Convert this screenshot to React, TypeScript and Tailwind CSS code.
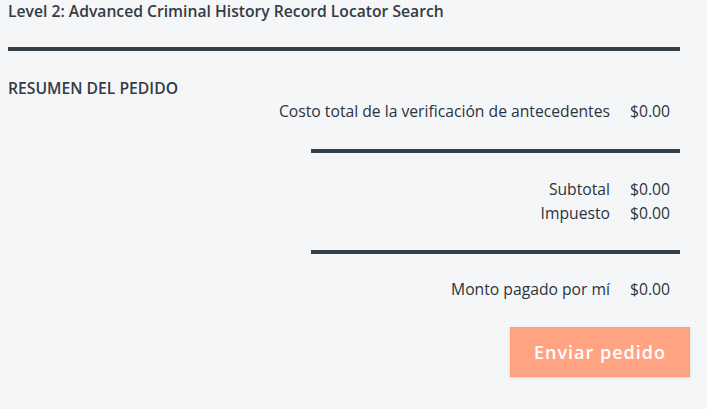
const rows1 = [{ label: 'Costo total de la verificación de antecedentes', value: '$0.00' }];
const rows2 = [
  { label: 'Subtotal', value: '$0.00' },
  { label: 'Impuesto', value: '$0.00' },
];

function Row({ label, value }: { label: string; value: string }) {
  return (
    <div className="flex justify-end items-center h-6">
      <span>{label}</span>
      <span className="w-[59px] pl-5">{value}</span>
    </div>
  );
}

export default function App() {
  return (
    <div
      className="w-[707px] h-[409px] bg-[#f5f6f8] text-[#2b333d] text-[15.7px]"
      style={{ fontFamily: '"Open Sans", "Liberation Sans", sans-serif' }}
    >
      <div className="w-[672px] ml-2">
        <h1 className="font-semibold leading-[22px] text-[#333b45]">
          Level 2: Advanced Criminal History Record Locator Search
        </h1>
        <div className="h-1 bg-[#333e48] mt-[25px]" />
        <h2 className="font-semibold mt-[26px] leading-[22px] text-[#333b45]">RESUMEN DEL PEDIDO</h2>
        <div className="pr-[11px] mt-[1px]">
          {rows1.map((r) => (
            <Row key={r.label} {...r} />
          ))}
        </div>
        <div className="h-1 bg-[#333e48] ml-[303px] mt-[25px]" />
        <div className="pr-[11px] mt-[25px]">
          {rows2.map((r) => (
            <Row key={r.label} {...r} />
          ))}
        </div>
        <div className="h-1 bg-[#333e48] ml-[303px] mt-6" />
        <div className="pr-[11px] mt-6">
          <Row label="Monto pagado por mí" value="$0.00" />
        </div>
        <div className="flex justify-end mt-[25px] -mr-[10px]">
          <button className="w-[180px] h-[50px] bg-[#ffa383] border border-[#ff9d78] text-white font-semibold text-lg tracking-[1px] shadow-sm">
            Enviar pedido
          </button>
        </div>
      </div>
    </div>
  );
}
